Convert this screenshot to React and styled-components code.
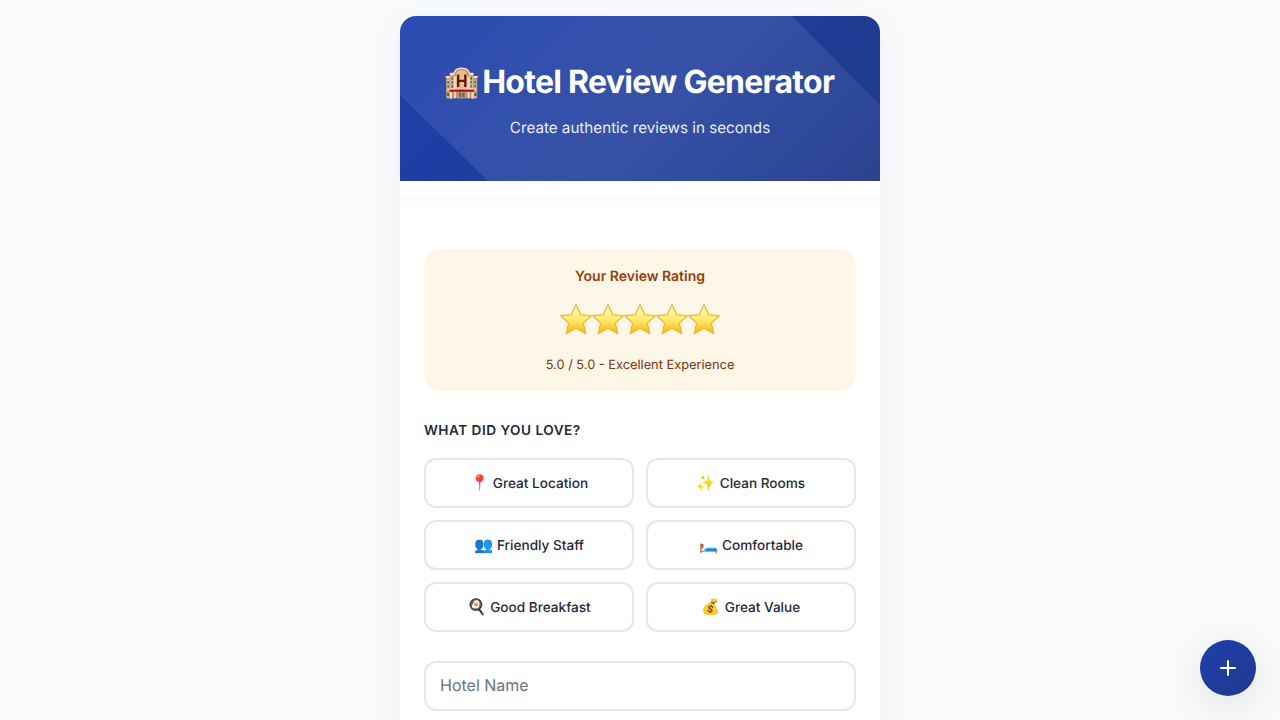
import React from "react";
import styled, { createGlobalStyle } from "styled-components";
import { Plus } from "lucide-react";

const highlights = [
  { emoji: "📍", label: "Great Location" },
  { emoji: "✨", label: "Clean Rooms" },
  { emoji: "👥", label: "Friendly Staff" },
  { emoji: "🛏️", label: "Comfortable" },
  { emoji: "🍳", label: "Good Breakfast" },
  { emoji: "💰", label: "Great Value" },
];

function Star() {
  return (
    <StarIcon viewBox="0 0 34 32" aria-hidden="true">
      <defs>
        <linearGradient id="starFill" x1="0" y1="0" x2="0" y2="1">
          <stop offset="0" stopColor="#fff8c4" />
          <stop offset="0.5" stopColor="#ffeb6a" />
          <stop offset="1" stopColor="#fdb40f" />
        </linearGradient>
      </defs>
      <path
        d="M17 1.6l4.6 10 10.8 1.2-8 7.3 2.2 10.6L17 25.3l-9.6 5.4 2.2-10.6-8-7.3 10.8-1.2z"
        fill="url(#starFill)"
        stroke="#f0b23c"
        strokeWidth="1.2"
        strokeLinejoin="round"
      />
    </StarIcon>
  );
}

function App() {
  return (
    <>
      <GlobalStyle />
      <Page>
        <Card>
          <Header>
            <Title>
              <TitleEmoji>🏨</TitleEmoji>
              <span>Hotel Review Generator</span>
            </Title>
            <Subtitle>Create authentic reviews in seconds</Subtitle>
          </Header>
          <ProgressTrack />
          <Content>
            <RatingBox>
              <RatingTitle>Your Review Rating</RatingTitle>
              <Stars role="img" aria-label="5 stars">
                {[1, 2, 3, 4, 5].map((n) => (
                  <Star key={n} />
                ))}
              </Stars>
              <RatingText>5.0 / 5.0 - Excellent Experience</RatingText>
            </RatingBox>
            <SectionLabel>What did you love?</SectionLabel>
            <ChipGrid>
              {highlights.map((item) => (
                <Chip key={item.label}>
                  <ChipEmoji>{item.emoji}</ChipEmoji> {item.label}
                </Chip>
              ))}
            </ChipGrid>
            <TextInput placeholder="Hotel Name" />
          </Content>
        </Card>
        <Fab aria-label="Add">
          <Plus size={24} strokeWidth={2} />
        </Fab>
      </Page>
    </>
  );
}

export default App;

const GlobalStyle = createGlobalStyle`
  * {
    box-sizing: border-box;
  }

  body {
    margin: 0;
    background: #f9fafb;
    font-family: Inter, "Noto Sans", sans-serif;
    color: #1f2937;
    text-rendering: geometricPrecision;
  }
`;

const Page = styled.div`
  padding: 16px 0;
`;

const Card = styled.div`
  width: 480px;
  margin: 0 auto;
  background: #ffffff;
  border-radius: 16px;
  overflow: hidden;
  box-shadow: 0 10px 40px rgba(0, 0, 0, 0.05);
`;

const Header = styled.header`
  position: relative;
  height: 165px;
  padding: 48px 24px 0;
  text-align: center;
  color: #ffffff;
  background: linear-gradient(135deg, #1e40af 0%, #1e3a8a 100%);

  &::before {
    content: "";
    position: absolute;
    inset: 0;
    background: linear-gradient(
      135deg,
      rgba(255, 255, 255, 0.06) 0%,
      rgba(255, 255, 255, 0.11) 50%,
      rgba(255, 255, 255, 0.05) 100%
    );
    clip-path: polygon(0 79px, 0 0, 392px 0, 480px 89px, 480px 165px, 88px 165px);
  }
`;

const Title = styled.h1`
  position: relative;
  display: flex;
  justify-content: center;
  align-items: center;
  gap: 1px;
  margin: 0 0 16px;
  padding-right: 2px;
  font-size: 32px;
  line-height: 36px;
  font-weight: 700;
  letter-spacing: -0.72px;
`;

const TitleEmoji = styled.span`
  font-size: 30px;
  letter-spacing: 0;
`;

const Subtitle = styled.p`
  position: relative;
  margin: 0;
  font-size: 15.2px;
  line-height: 24px;
  opacity: 0.9;
`;

const ProgressTrack = styled.div`
  height: 4px;
  margin-top: 16px;
  background: #f9fafb;
`;

const Content = styled.div`
  padding: 48px 24px 24px;
`;

const RatingBox = styled.section`
  height: 142px;
  padding: 18px 24px 0;
  margin-bottom: 29px;
  border-radius: 16px;
  background: #fef6e7;
  text-align: center;
  color: #92400e;
`;

const RatingTitle = styled.div`
  font-size: 14px;
  line-height: 20px;
  font-weight: 600;
`;

const Stars = styled.div`
  display: flex;
  justify-content: center;
  align-items: center;
  height: 40px;
  margin: 12px 0 17px;
`;

const StarIcon = styled.svg`
  width: 34px;
  height: 32px;
  margin: 0 -1px;
  flex: none;
`;

const RatingText = styled.div`
  font-size: 12.8px;
  line-height: 20px;
  color: #78350f;
`;

const SectionLabel = styled.h2`
  margin: 0 0 16px;
  font-size: 13.6px;
  line-height: 22px;
  font-weight: 600;
  letter-spacing: 0.5px;
  text-transform: uppercase;
  color: #1f2937;
`;

const ChipGrid = styled.div`
  display: grid;
  grid-template-columns: 1fr 1fr;
  gap: 12px;
  margin-bottom: 29px;
`;

const Chip = styled.button`
  height: 50px;
  padding: 0 12px 2px;
  border: 2px solid #e5e7eb;
  border-radius: 12px;
  background: #ffffff;
  font-family: inherit;
  font-size: 13.6px;
  font-weight: 500;
  color: #1f2937;
  text-rendering: geometricPrecision;
`;

const ChipEmoji = styled.span`
  font-size: 15.5px;
`;

const TextInput = styled.input`
  display: block;
  width: 100%;
  height: 50px;
  padding: 0 14px 2px;
  border: 2px solid #e5e7eb;
  border-radius: 12px;
  background: #ffffff;
  font-family: inherit;
  font-size: 16px;
  color: #1f2937;
  text-rendering: geometricPrecision;

  &::placeholder {
    color: #6b7280;
  }
`;

const Fab = styled.button`
  position: fixed;
  right: 24px;
  bottom: 24px;
  width: 56px;
  height: 56px;
  display: flex;
  align-items: center;
  justify-content: center;
  padding: 0;
  border: none;
  border-radius: 50%;
  color: #ffffff;
  background: linear-gradient(135deg, #1e40af 0%, #1e3a8a 100%);
  box-shadow: 0 10px 40px rgba(0, 0, 0, 0.1);
`;
